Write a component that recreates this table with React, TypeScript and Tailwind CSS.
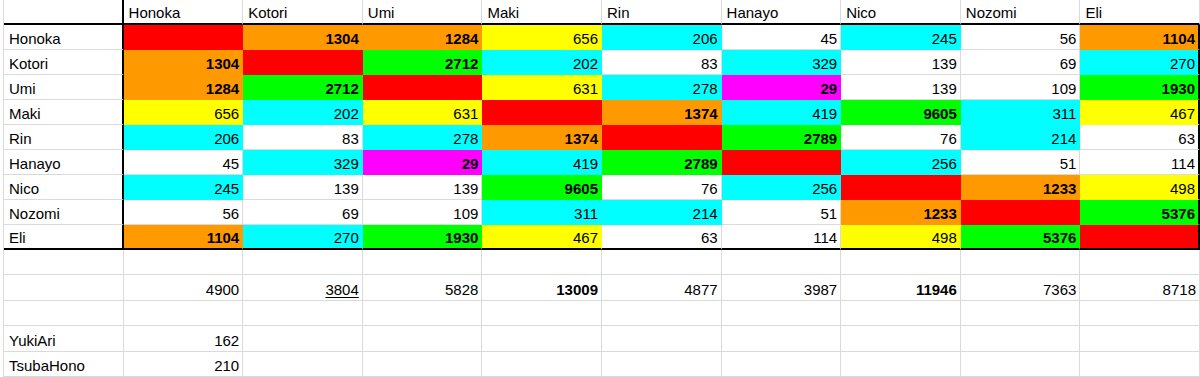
import React from "react";

const names = ["Honoka", "Kotori", "Umi", "Maki", "Rin", "Hanayo", "Nico", "Nozomi", "Eli"];

// r red, o orange, y yellow, c cyan, g green, m magenta, w white
const fills: Record<string, string> = {
  r: "bg-[#ff0000] border-[#ff0000]",
  o: "bg-[#ff9900] border-[#ff9900]",
  y: "bg-[#ffff00] border-[#ffff00]",
  c: "bg-[#00ffff] border-[#00ffff]",
  g: "bg-[#00ff00] border-[#00ff00]",
  m: "bg-[#ff00ff] border-[#ff00ff]",
  w: "bg-white border-[#dadada]",
};

type Cell = [string, string];

const matrix: Cell[][] = [
  [["r", ""], ["o", "1304"], ["o", "1284"], ["y", "656"], ["c", "206"], ["w", "45"], ["c", "245"], ["w", "56"], ["o", "1104"]],
  [["o", "1304"], ["r", ""], ["g", "2712"], ["c", "202"], ["w", "83"], ["c", "329"], ["w", "139"], ["w", "69"], ["c", "270"]],
  [["o", "1284"], ["g", "2712"], ["r", ""], ["y", "631"], ["c", "278"], ["m", "29"], ["w", "139"], ["w", "109"], ["g", "1930"]],
  [["y", "656"], ["c", "202"], ["y", "631"], ["r", ""], ["o", "1374"], ["c", "419"], ["g", "9605"], ["c", "311"], ["y", "467"]],
  [["c", "206"], ["w", "83"], ["c", "278"], ["o", "1374"], ["r", ""], ["g", "2789"], ["w", "76"], ["c", "214"], ["w", "63"]],
  [["w", "45"], ["c", "329"], ["m", "29"], ["c", "419"], ["g", "2789"], ["r", ""], ["c", "256"], ["w", "51"], ["w", "114"]],
  [["c", "245"], ["w", "139"], ["w", "139"], ["g", "9605"], ["w", "76"], ["c", "256"], ["r", ""], ["o", "1233"], ["y", "498"]],
  [["w", "56"], ["w", "69"], ["w", "109"], ["c", "311"], ["c", "214"], ["w", "51"], ["o", "1233"], ["r", ""], ["g", "5376"]],
  [["o", "1104"], ["c", "270"], ["g", "1930"], ["y", "467"], ["w", "63"], ["w", "114"], ["y", "498"], ["g", "5376"], ["r", ""]],
];

const totals = ["4900", "3804", "5828", "13009", "4877", "3987", "11946", "7363", "8718"];

const base = "flex items-end pb-[2px] border-r border-b text-[15px] leading-[17px] text-black whitespace-nowrap overflow-hidden";

function isBold(v: string) {
  return v === "29" || Number(v) >= 1000;
}

export default function App() {
  const lower = [
    { label: "", values: [] as string[] },
    { label: "", values: totals },
    { label: "", values: [] as string[] },
    { label: "YukiAri", values: ["162"] },
    { label: "TsubaHono", values: ["210"] },
  ];

  return (
    <div className="w-[1200px] h-[377px] bg-white overflow-hidden" style={{ fontFamily: '"Liberation Sans", Arial, sans-serif' }}>
      <div className="ml-[3px] w-[1197px] border-l border-[#dadada] grid grid-cols-10">
        {/* header */}
        <div className={`${base} h-[25px] pl-[5px] bg-white border-[#dadada] border-b-2 border-b-black border-r-2 border-r-black`} />
        {names.map((n) => (
          <div key={n} className={`${base} h-[25px] pl-[5px] bg-white border-[#dadada] border-b-2 border-b-black`}>
            {n}
          </div>
        ))}

        {/* data */}
        {matrix.map((row, ri) => {
          const last = ri === matrix.length - 1;
          return (
            <React.Fragment key={ri}>
              <div
                className={`${base} h-[25px] pl-[5px] bg-white border-[#dadada] border-r-2 border-r-black ${last ? "border-b-2 border-b-black" : ""}`}
              >
                {names[ri]}
              </div>
              {row.map(([c, v], ci) => (
                <div
                  key={ci}
                  className={`${base} h-[25px] justify-end pr-[3px] ${fills[c]} ${isBold(v) ? "font-bold" : ""} ${
                    ci === 8 ? "border-r-2 border-r-black" : ""
                  } ${last ? "border-b-2 border-b-black" : ""}`}
                >
                  {v}
                </div>
              ))}
            </React.Fragment>
          );
        })}

        {/* lower rows */}
        {lower.map((row, ri) => (
          <React.Fragment key={"l" + ri}>
            <div className={`${base} h-[25.4px] pl-[5px] bg-white border-[#dadada]`}>{row.label}</div>
            {Array.from({ length: 9 }).map((_, ci) => {
              const v = row.values[ci] ?? "";
              const bold = v === "13009" || v === "11946";
              return (
                <div
                  key={ci}
                  className={`${base} h-[25.4px] justify-end pr-[3px] bg-white border-[#dadada] ${bold ? "font-bold" : ""}`}
                >
                  <span className={v === "3804" ? "underline underline-offset-2" : ""}>{v}</span>
                </div>
              );
            })}
          </React.Fragment>
        ))}
      </div>
    </div>
  );
}
